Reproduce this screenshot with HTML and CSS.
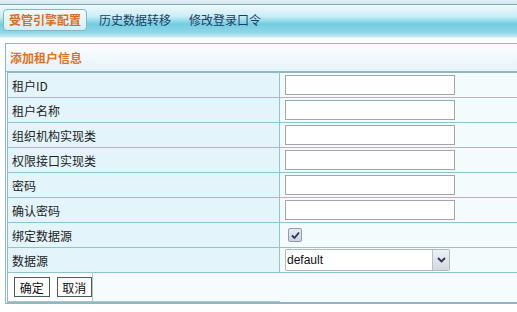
FILE: index.html
```html
<!DOCTYPE html>
<html lang="zh-CN">
<head>
  <meta charset="UTF-8">
  <title>添加租户信息</title>
  <link rel="stylesheet" href="styles.css">
</head>
<body>
  <div class="top-strip"></div>
  <div class="tabs">
    <span class="tab active">受管引擎配置</span>
    <span class="tab">历史数据转移</span>
    <span class="tab">修改登录口令</span>
  </div>

  <div class="panel">
    <div class="panel-title">添加租户信息</div>
    <table class="form-table">
      <tr><td class="label">租户ID</td><td class="field"><input type="text"></td></tr>
      <tr><td class="label">租户名称</td><td class="field"><input type="text"></td></tr>
      <tr><td class="label">组织机构实现类</td><td class="field"><input type="text"></td></tr>
      <tr><td class="label">权限接口实现类</td><td class="field"><input type="text"></td></tr>
      <tr><td class="label">密码</td><td class="field"><input type="password"></td></tr>
      <tr><td class="label">确认密码</td><td class="field"><input type="password"></td></tr>
      <tr>
        <td class="label">绑定数据源</td>
        <td class="field">
          <span class="check">
            <svg width="9" height="9" viewBox="0 0 9 9"><path d="M1 4.5 L3.5 7 L8 1.5" fill="none" stroke="#2b3440" stroke-width="1.8"/></svg>
          </span>
        </td>
      </tr>
      <tr>
        <td class="label">数据源</td>
        <td class="field">
          <div class="select">
            <span class="select-text">default</span>
            <span class="select-btn">
              <svg width="9" height="6" viewBox="0 0 9 6"><path d="M1 1 L4.5 4.5 L8 1" fill="none" stroke="#2a3550" stroke-width="1.8"/></svg>
            </span>
          </div>
        </td>
      </tr>
      <tr class="actions">
        <td colspan="2">
          <div class="btn-row">
            <div class="btn-box">
              <button>确定</button>
              <button>取消</button>
            </div>
          </div>
        </td>
      </tr>
    </table>
  </div>
</body>
</html>
```

FILE: styles.css
```css
* {
  box-sizing: border-box;
}
body {
  margin: 0;
  background: #fff;
  font-family: "Noto Sans CJK SC", "Liberation Sans", sans-serif;
  font-size: 12px;
  color: #222;
  overflow: hidden;
  width: 517px;
}
.top-strip {
  height: 5px;
  background: linear-gradient(to bottom, #e4f2f7, #cfe7ef);
  border-bottom: 1px solid #8aa9b6;
}
.tabs {
  height: 33px;
  display: flex;
  align-items: center;
  gap: 6px;
  padding: 0 0 2px 3px;
  background: linear-gradient(to bottom, #eef9fc 0%, #cbeef6 35%, #72cde0 60%, #8fd6e6 85%, #c4eaf3 100%);
  border-bottom: 1px solid #e6f4f8;
}
.tab {
  height: 22px;
  line-height: 20px;
  padding: 0 5px;
  border: 1px solid transparent;
  color: #1d3c66;
  white-space: nowrap;
}
.tab.active {
  color: #e06a1c;
  font-weight: bold;
  border-color: #86b6c6;
  border-radius: 4px;
  background: linear-gradient(to bottom, #f4fbfd, #d2eff7);
}
.panel {
  margin: 5px 0 0 5px;
  width: 530px;
  border: 1px solid #93b7c2;
  border-right: none;
  background: #f6fcfe;
}
.panel-title {
  height: 28px;
  line-height: 28px;
  padding-left: 4px;
  color: #e2701e;
  font-weight: bold;
  background: linear-gradient(to bottom, #fbfeff, #e6f4fa);
  border-bottom: 1px solid #93b7c2;
}
.form-table {
  margin-left: 1px;
  width: 528px;
  border-collapse: collapse;
  border-top: 1px solid #93b7c2;
  border-left: 1px solid #93b7c2;
}
.form-table td {
  height: 25px;
  padding: 0;
  border-bottom: 1px solid #8fc3ce;
}
.label {
  width: 272px;
  padding-left: 4px !important;
  background: #e3f4fb;
  border-right: 1px solid #8fc3ce;
}
.field {
  padding-left: 5px !important;
  background: #f3fbfd;
}
.field input {
  display: block;
  width: 170px;
  height: 20px;
  border: 1px solid #a5a5a5;
  background: #fff;
}
.check {
  display: flex;
  align-items: center;
  justify-content: center;
  width: 14px;
  height: 14px;
  margin-left: 3px;
  border: 1px solid #8a9bb2;
  border-radius: 2px;
  background: linear-gradient(to bottom, #e6ecf4, #c9d3e2);
}
.select {
  display: flex;
  width: 165px;
  height: 22px;
  border: 1px solid #b2b8c0;
  border-radius: 2px;
  background: #fff;
}
.select-text {
  flex: 1;
  line-height: 20px;
  padding-left: 1px;
  font-family: "Liberation Sans", sans-serif;
  font-size: 12px;
  color: #111;
}
.select-btn {
  width: 17px;
  display: flex;
  align-items: center;
  justify-content: center;
  border-left: 1px solid #b8c0ca;
  border-radius: 0 2px 2px 0;
  background: linear-gradient(to bottom, #eef1f5, #d3d9e1);
}
.actions td {
  height: 30px;
  background: #f6fcfe;
  border-bottom: 1px solid #93b7c2;
  vertical-align: top;
}
.btn-row {
  width: 272px;
  border-bottom: 1px solid #a8c8d0;
}
.btn-box {
  display: flex;
  gap: 7px;
  width: 85px;
  height: 28px;
  padding: 4px 0 0 6px;
  border-right: 1px solid #a8c8d0;
  background: #fff;
}
.btn-box button {
  width: 36px;
  height: 20px;
  padding: 0;
  font-family: "Noto Sans CJK SC", sans-serif;
  font-size: 12px;
  color: #111;
  background: #fdfdfd;
  border: 1px solid #4a5a62;
}
```
